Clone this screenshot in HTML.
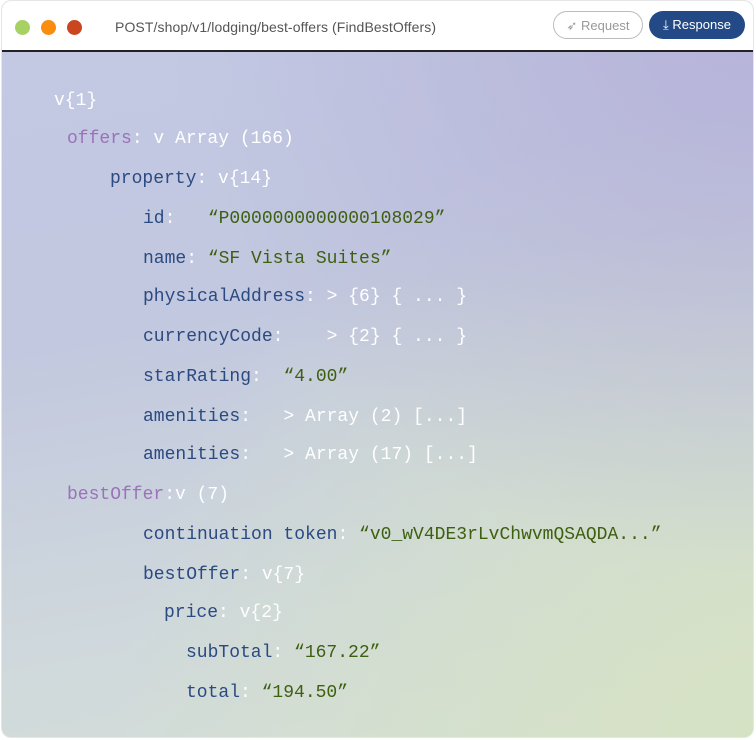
<!DOCTYPE html>
<html><head><style>
html,body{margin:0;padding:0;width:756px;height:740px;background:#fff;overflow:hidden}
.card{position:absolute;left:1px;top:0;width:753px;height:738px;border-radius:10px;overflow:hidden;border:1px solid #e6e6e6;box-sizing:border-box;
background:radial-gradient(ellipse at 100% 0%,rgba(180,176,216,.9),rgba(180,176,216,0) 55%),radial-gradient(ellipse at 100% 100%,rgba(214,226,196,1),rgba(214,226,196,0) 60%),linear-gradient(170deg,#c3c9e4 0%,#c2c8df 40%,#cfd8dc 75%,#d5dfd6 100%)}
.hdr{position:absolute;left:0;top:0;right:0;height:49px;background:#fff;border-bottom:2px solid #222}
.dot{position:absolute;top:19px;width:15px;height:15px;border-radius:50%}
.title{position:absolute;left:113px;top:18px;font:14px "Liberation Sans",sans-serif;color:#555;letter-spacing:0.1px}
.btn{position:absolute;top:10px;height:28px;border-radius:14px;font:13px "Liberation Sans",sans-serif;line-height:28px;text-align:center;box-sizing:border-box}
.l{position:absolute;font:18px "Liberation Mono",monospace;white-space:pre;color:#fff;line-height:20px}
.k{color:#2b4a82}.p{color:#9b72b9}.s{color:#3d5f10}
</style></head><body>
<div class="card">
<div class="hdr">
<div class="dot" style="left:13px;background:#a8d163"></div>
<div class="dot" style="left:39px;background:#fa8c0e"></div>
<div class="dot" style="left:65px;background:#c9461e"></div>
<div class="title">POST/shop/v1/lodging/best-offers (FindBestOffers)</div>
<div class="btn" style="left:551px;width:90px;border:1px solid #bbb;color:#999">➶ Request</div>
<div class="btn" style="left:647px;width:96px;background:#234a86;color:#fff">⤓ Response</div>
</div>
<div class="l" style="left:52px;top:90px">v{1}</div>
<div class="l" style="left:65px;top:128px"><span class="p">offers</span>: v Array (166)</div>
<div class="l" style="left:108px;top:168px"><span class="k">property</span>: v{14}</div>
<div class="l" style="left:141px;top:208px"><span class="k">id</span>:   <span class="s">“P0000000000000108029”</span></div>
<div class="l" style="left:141px;top:248px"><span class="k">name</span>: <span class="s">“SF Vista Suites”</span></div>
<div class="l" style="left:141px;top:286px"><span class="k">physicalAddress</span>: &gt; {6} { ... }</div>
<div class="l" style="left:141px;top:326px"><span class="k">currencyCode</span>:    &gt; {2} { ... }</div>
<div class="l" style="left:141px;top:366px"><span class="k">starRating</span>:  <span class="s">“4.00”</span></div>
<div class="l" style="left:141px;top:406px"><span class="k">amenities</span>:   &gt; Array (2) [...]</div>
<div class="l" style="left:141px;top:444px"><span class="k">amenities</span>:   &gt; Array (17) [...]</div>
<div class="l" style="left:65px;top:484px"><span class="p">bestOffer</span>:v (7)</div>
<div class="l" style="left:141px;top:524px"><span class="k">continuation token</span>: <span class="s">“v0_wV4DE3rLvChwvmQSAQDA...”</span></div>
<div class="l" style="left:141px;top:564px"><span class="k">bestOffer</span>: v{7}</div>
<div class="l" style="left:162px;top:602px"><span class="k">price</span>: v{2}</div>
<div class="l" style="left:184px;top:642px"><span class="k">subTotal</span>: <span class="s">“167.22”</span></div>
<div class="l" style="left:184px;top:682px"><span class="k">total</span>: <span class="s">“194.50”</span></div>
</div>
</body></html>
